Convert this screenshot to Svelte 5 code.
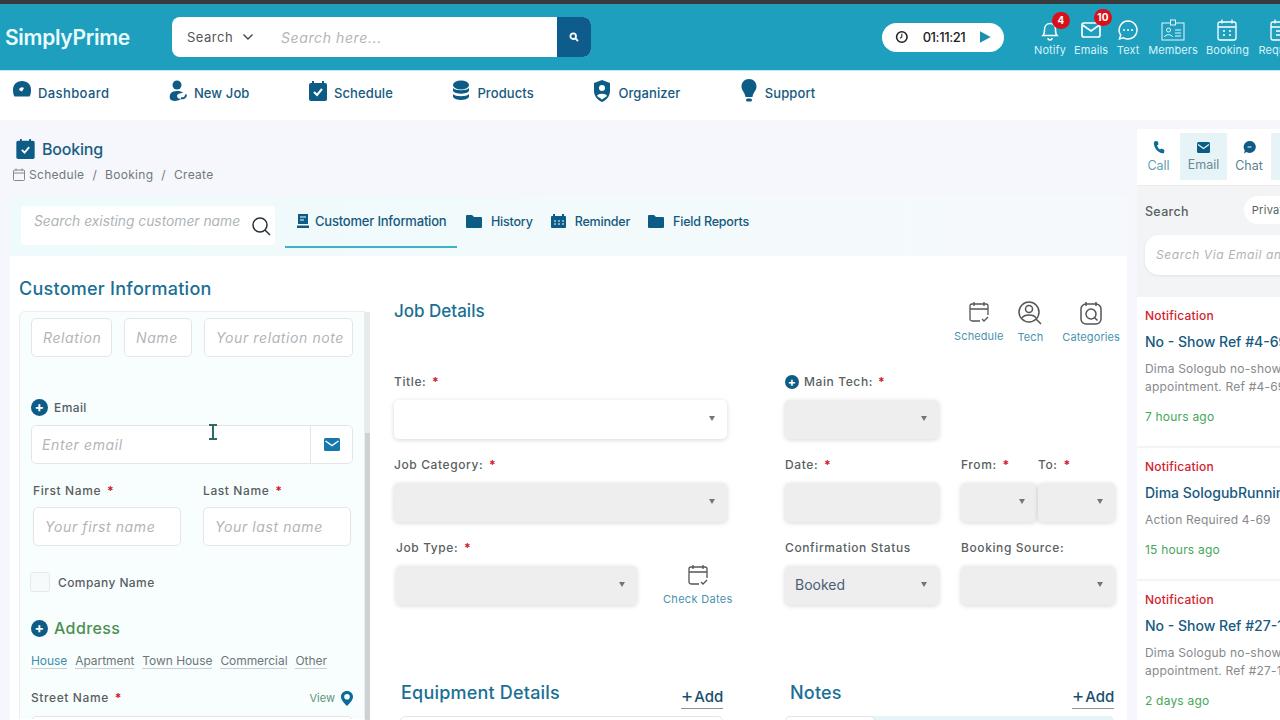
<script>
    const navItems = [
        { name: "Dashboard", icon: "gauge" },
        { name: "New Job", icon: "person" },
        { name: "Schedule", icon: "check" },
        { name: "Products", icon: "db" },
        { name: "Organizer", icon: "shield" },
        { name: "Support", icon: "bulb" }
    ];

    const tabs = ["History", "Reminder", "Field Reports"];
    const addressTypes = ["House", "Apartment", "Town House", "Commercial", "Other"];

    const notes = [
        { title: "No - Show Ref #4-69 Appointment", lines: ["Dima Sologub no-show for", "appointment. Ref #4-69"], time: "7 hours ago" },
        { title: "Dima SologubRunning Late", lines: ["Action Required 4-69"], time: "15 hours ago" },
        { title: "No - Show Ref #27-13 Appointment", lines: ["Dima Sologub no-show for", "appointment. Ref #27-13"], time: "2 days ago" }
    ];
</script>

<div class="topline"></div>

<header class="header">
    <div class="logo">SimplyPrime</div>
    <div class="search">
        <div class="search-kind">Search
            <svg width="12" height="8" viewBox="0 0 12 8"><path d="M1.5 1.5 6 6l4.500-4.500" fill="none" stroke="#444" stroke-width="1.400"/></svg>
        </div>
        <div class="search-input">Search here...</div>
        <div class="search-btn">
            <svg width="10" height="10" viewBox="0 0 10 10"><circle cx="4.200" cy="4.200" r="2.800" fill="none" stroke="#fff" stroke-width="1.800"/><path d="m6.500 6.500 2.500 2.500" stroke="#fff" stroke-width="1.800"/></svg>
        </div>
    </div>
    <div class="timer">
        <svg width="14" height="14" viewBox="0 0 13 13"><circle cx="6.500" cy="6.500" r="5" fill="none" stroke="#222" stroke-width="1.500"/><path d="M6.500 3.500v3L4.800 7.800" fill="none" stroke="#222"/></svg>
        <span>01:11:21</span>
        <svg width="11" height="12" viewBox="0 0 11 12"><path d="M0 0l11 6-11 6z" fill="#1f8fb0"/></svg>
    </div>
    <div class="tools">
        <div class="tool notify">
            <svg width="24" height="24" viewBox="0 0 24 24" fill="none" stroke="#fff" stroke-width="1.500"><path d="M5 17.500c1.500-1.500 1.500-3 1.500-6 0-3.500 2.300-6 5.500-6s5.500 2.500 5.500 6c0 3 0 4.500 1.500 6z"/><path d="M10 20a2 2 0 0 0 4 0"/></svg>
            <span class="badge">4</span>
            <span>Notify</span>
        </div>
        <div class="tool mails">
            <svg width="24" height="24" viewBox="0 0 24 24" fill="none" stroke="#fff" stroke-width="1.700"><rect x="3" y="5" width="18" height="14" rx="2"/><path d="m3.500 7 8.500 6 8.500-6"/></svg>
            <span class="badge">10</span>
            <span>Emails</span>
        </div>
        <div class="tool text">
            <svg width="24" height="24" viewBox="0 0 24 24" fill="none" stroke="#fff" stroke-width="1.500"><path d="M12 3a9 9 0 1 1-4.500 16.800L3.500 21l1.200-4A9 9 0 0 1 12 3z"/><path d="M8 12h.1M12 12h.1M16 12h.1" stroke-width="1.800" stroke-linecap="round"/></svg>
            <span>Text</span>
        </div>
        <div class="tool members">
            <svg width="24" height="24" viewBox="0 0 24 24" fill="none" stroke="#e8f6fa" stroke-width="1"><rect x="1" y="5" width="22" height="17"/><rect x="9.500" y="2" width="5" height="5" fill="#1f9fbd"/><circle cx="7.500" cy="12" r="2"/><path d="M3.500 19c.5-3 7.500-3 8 0M14 12h6M14 15h6M14 18h6"/></svg>
            <span>Members</span>
        </div>
        <div class="tool booking">
            <svg width="24" height="24" viewBox="0 0 24 24" fill="none" stroke="#fff" stroke-width="1.300"><rect x="3" y="4" width="18" height="18" rx="2"/><path d="M7 1.500v4M17 1.500v4M3 9h18M8 13h2M14 13h2M8 17h2M14 17h2"/></svg>
            <span>Booking</span>
        </div>
        <div class="tool request">
            <svg width="24" height="24" viewBox="0 0 24 24" fill="none" stroke="#fff" stroke-width="1.300"><rect x="3" y="4" width="18" height="18" rx="2"/><path d="M7 1.500v4M17 1.500v4M3 9h18M8 13h8M8 17h8"/></svg>
            <span>Request</span>
        </div>
    </div>
</header>

<nav class="nav">
    {#each navItems as item}
        <div class="nav-item">
            <svg class="nav-icon" width="22" height="24" viewBox="0 0 22 24" fill="#0d5c86">
                {#if item.icon === "gauge"}
                    <path d="M11 2c5.500 0 9 3.500 9 9 0 3-.5 5-1.500 6.500h-15C2.500 16 2 14 2 11c0-5.500 3.500-9 9-9z"/>
                    <path d="M8 11a3 3 0 0 1 5-2l-2 3.500z" fill="#fff"/>
                {:else if item.icon === "person"}
                    <circle cx="10" cy="6" r="4.500"/>
                    <path d="M3 20c-1-5 1-8 7-8 3 0 5 .5 6 2-3 0-6 1-6 3s2 3 4 3c-2 2-9 3-11 0z"/>
                    <path d="M14 19c2.500 1 5-.5 5-3.500" fill="none" stroke="#0d5c86" stroke-width="2"/>
                {:else if item.icon === "check"}
                    <path d="M6 2v3M16 2v3" stroke="#0d5c86" stroke-width="2"/>
                    <rect x="2" y="4" width="18" height="18" rx="2"/>
                    <path d="m7 13 3 3 5-6" fill="none" stroke="#fff" stroke-width="2"/>
                {:else if item.icon === "db"}
                    <ellipse cx="11" cy="6" rx="8" ry="4.500"/>
                    <path d="M3 9c2 3 14 3 16 0v3c-2 3.500-14 3.500-16 0zM3 15c2 3 14 3 16 0v3c-2 4-14 4-16 0z"/>
                {:else if item.icon === "shield"}
                    <path d="M11 1l8 3v8c0 5-3.500 9-8 11-4.500-2-8-6-8-11V4z"/>
                    <circle cx="11" cy="9" r="3" fill="#fff"/>
                    <path d="M6 17c1-3 9-3 10 0l-5 3.500z" fill="#fff"/>
                {:else}
                    <path d="M11 0c4.500 0 7.500 3.500 7.500 7.500 0 4-3.500 6-4 10.500h-7C7 13.500 3.500 11.500 3.500 7.500 3.500 3.500 6.500 0 11 0z"/>
                    <rect x="8" y="19.500" width="6" height="3" rx="1.500"/>
                {/if}
            </svg>
            <span>{item.name}</span>
        </div>
    {/each}
</nav>

<div class="page">
    <main class="content">
        <div class="title-row">
            <svg width="21" height="22" viewBox="0 0 22 24" fill="#0d5c86"><path d="M6 1v4M16 1v4" stroke="#0d5c86" stroke-width="2"/><rect x="1" y="3" width="20" height="20" rx="2"/><path d="m7 13 3 3 5-6" fill="none" stroke="#fff" stroke-width="2"/></svg>
            <h1>Booking</h1>
        </div>
        <div class="crumbs">
            <svg width="12" height="13" viewBox="0 0 12 13" fill="none" stroke="#888"><rect x=".5" y="2" width="11" height="10.500" rx="1"/><path d="M3 .5V3M9 .5V3M.5 5h11"/></svg>
            <span class="crumb-first">Schedule</span><i>/</i><span>Booking</span><i>/</i><span>Create</span>
        </div>

        <div class="tabbar">
            <div class="customer-search">
                <span>Search existing customer name</span>
                <svg width="20" height="20" viewBox="0 0 20 20" fill="none" stroke="#26323c" stroke-width="1.500"><circle cx="9" cy="9" r="7"/><path d="m14 14 5 5"/></svg>
            </div>
            <div class="tab active">
                <svg width="12" height="14" viewBox="0 0 12 14" fill="#0d5c86"><path d="M1 0h10v10H1z"/><path d="M3 3h6M3 6h4" stroke="#fff"/><path d="M0 11.500h12V14H0z"/></svg>
                Customer Information
            </div>
            {#each tabs as tab, i}
                <div class="tab">
                    {#if i === 1}
                        <svg width="15" height="14" viewBox="0 0 15 14" fill="#0d5c86"><rect y="2" width="15" height="12" rx="1"/><path d="M3 0v3M12 0v3" stroke="#0d5c86" stroke-width="2"/><path d="M3 7h2M7 7h2M11 7h2M3 10h2M7 10h2M11 10h2" stroke="#fff"/></svg>
                    {:else}
                        <svg width="16" height="14" viewBox="0 0 16 14" fill="#0d5c86"><path d="M0 2a1 1 0 0 1 1-1h5l2 2h7a1 1 0 0 1 1 1v9a1 1 0 0 1-1 1H1a1 1 0 0 1-1-1z"/></svg>
                    {/if}
                    {tab}
                </div>
            {/each}
        </div>

        <div class="sheet">
            <section class="customer">
                <h2>Customer Information</h2>
                <div class="scroller">
                    <div class="relation-row">
                        <div class="field rel">Relation</div>
                        <div class="field nam">Name</div>
                        <div class="field note">Your relation note</div>
                    </div>

                    <div class="plus-label email-label">
                        <span class="plus">+</span> Email
                    </div>
                    <div class="email-box">
                        <span>Enter email</span>
                        <div class="email-icon">
                            <svg width="16" height="13" viewBox="0 0 16 13"><rect width="16" height="13" rx="1.500" fill="#1577ab"/><path d="m1.500 3 6.500 4.500L14.500 3" fill="none" stroke="#fff" stroke-width="1.500"/></svg>
                        </div>
                    </div>

                    <div class="names">
                        <div>
                            <div class="lbl">First Name <b>*</b></div>
                            <div class="field">Your first name</div>
                        </div>
                        <div>
                            <div class="lbl">Last Name <b>*</b></div>
                            <div class="field">Your last name</div>
                        </div>
                    </div>

                    <div class="company">
                        <span class="box"></span> Company Name
                    </div>

                    <div class="plus-label address">
                        <span class="plus">+</span> Address
                    </div>
                    <div class="types">
                        {#each addressTypes as t, i}
                            <span class:first={i === 0}>{t}</span>
                        {/each}
                    </div>
                    <div class="street">
                        <div class="lbl">Street Name <b>*</b></div>
                        <div class="view">View
                            <svg width="12" height="15" viewBox="0 0 12 15"><path fill-rule="evenodd" d="M6 0c3.500 0 6 2.500 6 5.800 0 3.500-3.500 6.700-6 9.200C3.500 12.500 0 9.300 0 5.800 0 2.500 2.500 0 6 0zm0 3a2.800 2.800 0 1 0 0 5.600A2.800 2.800 0 0 0 6 3z" fill="#0d6a96"/></svg>
                        </div>
                    </div>
                    <div class="field street-field"></div>
                </div>
                <div class="scrollbar"><div class="thumb"></div></div>
            </section>

            <section class="job">
                <div class="job-head">
                    <h3>Job Details</h3>
                    <div class="job-actions">
                        <div class="action">
                            <svg width="22" height="22" viewBox="0 0 22 22" fill="none" stroke="#555" stroke-width="1.300"><path d="M12 20H4a2 2 0 0 1-2-2V5a2 2 0 0 1 2-2h14a2 2 0 0 1 2 2v9M6 1v4M16 1v4M2 8h18"/><path d="m14 18 2 2 4-4"/></svg>
                            Schedule
                        </div>
                        <div class="action tall">
                            <svg width="24" height="24" viewBox="0 0 24 24" fill="none" stroke="#555" stroke-width="1.500"><circle cx="11" cy="11" r="10"/><circle cx="11" cy="8" r="3.500"/><path d="M4 17c2-4 12-4 14 0M18 18l5 5"/></svg>
                            Tech
                        </div>
                        <div class="action tall cats">
                            <svg width="24" height="24" viewBox="0 0 24 24" fill="none" stroke="#555" stroke-width="1.500"><rect x="2" y="3" width="20" height="20" rx="5"/><path d="M7 1v4M17 1v4"/><circle cx="12" cy="13" r="5"/><path d="m15.500 16.500 3 3"/></svg>
                            Categories
                        </div>
                    </div>
                </div>

                <div class="job-cols">
                    <div class="job-left">
                        <div class="row">
                            <div class="lbl">Title: <b>*</b></div>
                            <div class="select white"><i></i></div>
                        </div>
                        <div class="row">
                            <div class="lbl">Job Category: <b>*</b></div>
                            <div class="select"><i></i></div>
                        </div>
                        <div class="row shift">
                            <div class="lbl">Job Type: <b>*</b></div>
                            <div class="type-row">
                                <div class="select"><i></i></div>
                                <div class="action check">
                                    <svg width="22" height="22" viewBox="0 0 22 22" fill="none" stroke="#555" stroke-width="1.300"><path d="M12 20H4a2 2 0 0 1-2-2V5a2 2 0 0 1 2-2h14a2 2 0 0 1 2 2v9M6 1v4M16 1v4M2 8h18"/><path d="m14 18 2 2 4-4"/></svg>
                                    Check Dates
                                </div>
                            </div>
                        </div>
                    </div>
                    <div class="job-right">
                        <div class="row">
                            <div class="lbl main-tech"><span class="plus small">+</span> Main Tech: <b>*</b></div>
                            <div class="select"><i></i></div>
                        </div>
                        <div class="row"></div>
                        <div class="row">
                            <div class="lbl">Date: <b>*</b></div>
                            <div class="select"></div>
                        </div>
                        <div class="row">
                            <div class="pair">
                                <div><div class="lbl">From: <b>*</b></div><div class="select"><i></i></div></div>
                                <div><div class="lbl">To: <b>*</b></div><div class="select"><i></i></div></div>
                            </div>
                        </div>
                        <div class="row">
                            <div class="lbl">Confirmation Status</div>
                            <div class="select value">Booked<i></i></div>
                        </div>
                        <div class="row">
                            <div class="lbl">Booking Source:</div>
                            <div class="select"><i></i></div>
                        </div>
                    </div>
                </div>

                <div class="lower">
                    <div class="lower-col equip">
                        <div class="lower-head">
                            <h4>Equipment Details</h4>
                            <div class="add"><span>+</span>Add</div>
                        </div>
                        <div class="lower-box"></div>
                    </div>
                    <div class="lower-col notes">
                        <div class="lower-head">
                            <h4>Notes</h4>
                            <div class="add"><span>+</span>Add</div>
                        </div>
                        <div class="notes-tabs"><div></div></div>
                    </div>
                </div>
            </section>
        </div>
    </main>

    <aside class="side">
        <div class="side-tabs">
            <div class="side-tab">
                <svg width="12" height="13" viewBox="0 0 12 13"><path d="M2.500 0 5 .5l.5 3-1.500 1c.5 1.500 1.500 3 3 4l1.500-1 3 1.500-.5 3c-5 1.500-11-6-10-11z" fill="#0d6a96"/></svg>
                Call
            </div>
            <div class="side-tab on">
                <svg width="13" height="11" viewBox="0 0 13 11"><rect width="13" height="11" rx="1.500" fill="#0d5c86"/><path d="m1 2.500 5.500 4 5.500-4" fill="none" stroke="#e6f4f7" stroke-width="1.200"/></svg>
                Email
            </div>
            <div class="side-tab">
                <svg width="13" height="13" viewBox="0 0 13 13"><path d="M6.500 0a6 6 0 1 1-3 11L1 12.500l.8-3A6 6 0 0 1 6.500 0z" fill="#0d5c86"/><path d="M4.500 6h4" stroke="#fff"/></svg>
                Chat
            </div>
            <div class="side-tab on"></div>
        </div>
        <div class="side-search">
            <div class="side-search-top">
                <span>Search</span>
                <div class="pill">Private</div>
            </div>
            <div class="side-input">Search Via Email and Name</div>
        </div>
        {#each notes as n}
            <article class="notice">
                <div class="n-kind">Notification</div>
                <div class="n-title">{n.title}</div>
                <div class="n-desc">
                    {#each n.lines as line}
                        <div>{line}</div>
                    {/each}
                </div>
                <div class="n-time">{n.time}</div>
            </article>
        {/each}
    </aside>
</div>

<svg class="cursor" width="10" height="16" viewBox="0 0 10 16" fill="none" stroke="#2d6b66" stroke-width="2"><path d="M1 1h8M1 15h8M5 1v14"/></svg>

<style>
    :global(body) {
        margin: 0;
        height: 720px;
        overflow: hidden;
        background: #f6f7fc;
        font-family: "Inter", "Open Sans", sans-serif;
        color: #555;
    }
    h1, h2, h3, h4 {
        margin: 0;
        font-weight: 500;
    }
    .topline {
        height: 4px;
        background: #383b3d;
    }
    .header {
        height: 66px;
        width: 1280px;
        overflow: hidden;
        background: #1e9fbd;
        border-bottom: 1px solid #b9eef5;
        display: flex;
        align-items: center;
        color: #fff;
    }
    .logo {
        flex: none;
        width: 172px;
        padding-left: 5px;
        box-sizing: border-box;
        font-size: 21px;
        font-weight: 600;
        letter-spacing: -0.3px;
        color: #e8fbff;
    }
    .search {
        flex: none;
        width: 419px;
        height: 40px;
        background: #fff;
        border-radius: 8px;
        display: flex;
        align-items: center;
        color: #555;
        overflow: hidden;
    }
    .search-kind {
        width: 109px;
        padding-left: 15px;
        box-sizing: border-box;
        font-size: 13px;
        letter-spacing: 0.5px;
        display: flex;
        align-items: center;
        gap: 9px;
    }
    .search-input {
        flex: 1;
        font-size: 14px;
        font-style: italic;
        letter-spacing: 0.6px;
        color: #b5b5b5;
    }
    .search-btn {
        width: 34px;
        height: 40px;
        background: #0d5c8c;
        display: flex;
        align-items: center;
        justify-content: center;
    }
    .timer {
        flex: none;
        margin-left: 291px;
        width: 122px;
        height: 29px;
        background: #fff;
        border-radius: 15px;
        display: flex;
        align-items: center;
        padding: 0 13px;
        box-sizing: border-box;
        font-size: 13px;
        font-weight: 500;
        color: #222;
    }
    .timer span {
        margin: 0 15px 0 14px;
        letter-spacing: -0.4px;
    }
    .tools {
        flex: none;
        margin-left: 30px;
        display: flex;
        align-items: flex-start;
        white-space: nowrap;
    }
    .tool {
        position: relative;
        display: flex;
        flex-direction: column;
        align-items: center;
        gap: 1px;
        font-size: 11px;
        letter-spacing: 0.1px;
        color: #d6f3f9;
        margin-right: 8px;
        line-height: 14px;
    }
    .tool.request {
        width: 46px;
        margin-right: 0;
    }
    .badge {
        position: absolute;
        top: -6px;
        left: 18px;
        min-width: 16px;
        height: 17px;
        padding: 0 1px;
        border-radius: 9px;
        background: #d9101a;
        font-size: 10px;
        font-weight: 700;
        line-height: 17px;
        text-align: center;
        color: #fff;
    }
    .mails .badge {
        top: -9px;
        left: 20px;
    }
    .nav {
        height: 49px;
        background: #fff;
        display: flex;
        align-items: center;
        gap: 57.500px;
        padding: 0 0 5px 11px;
        box-sizing: border-box;
    }
    .nav-item {
        display: flex;
        align-items: center;
        gap: 5px;
        font-size: 13px;
        font-weight: 500;
        letter-spacing: 0.1px;
        color: #145a80;
    }
    .nav-item:first-child {
        letter-spacing: 0.4px;
    }
    .nav-icon {
        margin-top: -5px;
    }
    .page {
        display: flex;
        height: 600px;
        overflow: hidden;
    }
    .content {
        flex: none;
        width: 1127px;
        padding: 18px 0 0 10px;
        box-sizing: border-box;
    }
    .title-row {
        display: flex;
        align-items: center;
        gap: 6px;
        padding-left: 5px;
        height: 22px;
        color: #1b5e84;
    }
    h1 {
        font-size: 16px;
        letter-spacing: -0.2px;
    }
    .crumbs {
        display: flex;
        align-items: center;
        margin-top: 7px;
        padding-left: 3px;
        font-size: 12px;
        letter-spacing: 0.3px;
        color: #6f7a80;
    }
    .crumb-first {
        margin-left: 4px;
    }
    .crumbs i {
        margin: 0 8px;
        font-style: normal;
    }
    .tabbar {
        margin-top: 14px;
        height: 60px;
        background: linear-gradient(90deg, #eefafb, #f3fafc 60%, #f6f9fc);
        display: flex;
        align-items: flex-start;
        padding: 10px 0 0 11px;
        box-sizing: border-box;
    }
    .customer-search {
        flex: none;
        width: 254px;
        height: 39px;
        background: #fff;
        border-radius: 4px;
        display: flex;
        align-items: center;
        justify-content: space-between;
        padding: 0 4px 0 13px;
        box-sizing: border-box;
        font-size: 13.800px;
        font-style: italic;
        color: #aeb4b8;
    }
    .customer-search span {
        margin-top: -9px;
    }
    .tab {
        height: 47px;
        display: flex;
        align-items: center;
        gap: 9px;
        padding: 0 9px 7px;
        box-sizing: border-box;
        font-size: 12.500px;
        font-weight: 500;
        letter-spacing: -0.2px;
        color: #15597e;
        margin-top: -5px;
    }
    .tab.active {
        margin-left: 10px;
        width: 172px;
        padding: 0 0 6px 12px;
        gap: 6px;
        font-size: 13px;
        border-bottom: 2px solid #3fb1c9;
    }
    .sheet {
        height: 464px;
        background: #fff;
        display: flex;
    }
    .customer {
        flex: none;
        width: 384px;
        padding: 22px 0 0 9px;
        box-sizing: border-box;
        position: relative;
    }
    h2 {
        font-size: 18px;
        letter-spacing: 0.25px;
        color: #1a7094;
    }
    .scroller {
        margin-top: 12px;
        width: 346px;
        height: 408px;
        box-sizing: border-box;
        border: 1px solid #e9eeee;
        border-bottom: 0;
        border-radius: 6px 0 0 0;
        background: #f8fefe;
        padding: 6px 0 0 11px;
        overflow: hidden;
    }
    .scrollbar {
        position: absolute;
        left: 355px;
        top: 56px;
        width: 5px;
        height: 408px;
        background: #e7eaeb;
    }
    .thumb {
        margin-top: 121px;
        height: 287px;
        background: #cfd2d4;
    }
    .field {
        height: 39px;
        background: #fff;
        border: 1px solid #e3e6e8;
        border-radius: 5px;
        box-sizing: border-box;
        display: flex;
        align-items: center;
        padding: 0 11px;
        font-size: 14px;
        font-style: italic;
        letter-spacing: 0.6px;
        color: #b3b5b8;
        white-space: nowrap;
        overflow: hidden;
    }
    .relation-row {
        display: flex;
        gap: 12px;
    }
    .rel { width: 81px; }
    .nam { width: 68px; }
    .note { width: 149px; }
    .plus-label {
        display: flex;
        align-items: center;
        gap: 6px;
        font-size: 12px;
        font-weight: 500;
        letter-spacing: 0.4px;
        color: #555d63;
    }
    .plus {
        width: 17px;
        height: 17px;
        border-radius: 50%;
        background: #0d5c86;
        color: #fff;
        font-size: 14px;
        font-weight: 700;
        line-height: 16px;
        text-align: center;
    }
    .plus.small {
        width: 14px;
        height: 14px;
        font-size: 12px;
        line-height: 13px;
        display: inline-block;
        margin-right: 2px;
    }
    .email-label {
        margin-top: 42px;
    }
    .email-box {
        margin-top: 9px;
        width: 322px;
        height: 39px;
        background: #fff;
        border: 1px solid #e3e6e8;
        border-radius: 5px;
        box-sizing: border-box;
        display: flex;
        align-items: center;
        justify-content: space-between;
        padding-left: 10px;
        font-size: 14px;
        font-style: italic;
        letter-spacing: 0.6px;
        color: #b3b5b8;
    }
    .email-icon {
        width: 41px;
        height: 100%;
        border-left: 1px solid #e3e6e8;
        display: flex;
        align-items: center;
        justify-content: center;
    }
    .names {
        margin-top: 19px;
        padding-left: 2px;
        display: grid;
        grid-template-columns: 148px 148px;
        column-gap: 22px;
    }
    .lbl {
        font-size: 12px;
        font-weight: 500;
        letter-spacing: 0.6px;
        line-height: 16px;
        color: #595f63;
        white-space: nowrap;
    }
    .lbl b {
        color: #d0142c;
        margin-left: 2px;
    }
    .names .lbl {
        margin-bottom: 8px;
    }
    .company {
        margin-top: 26px;
        display: flex;
        align-items: center;
        gap: 8px;
        font-size: 12px;
        font-weight: 500;
        letter-spacing: 0.4px;
        color: #595f63;
    }
    .box {
        width: 20px;
        height: 20px;
        background: #f6fafa;
        border: 1px solid #e6e9e9;
        border-radius: 3px;
        box-sizing: border-box;
        margin-left: -1px;
    }
    .address {
        margin-top: 26px;
        font-size: 16px;
        color: #4b8f50;
    }
    .types {
        margin-top: 16px;
        display: flex;
        gap: 8px;
        font-size: 12px;
        letter-spacing: -0.06px;
        color: #6d767b;
        height: 16px;
    }
    .types span {
        border-bottom: 1px solid #c9d0d3;
        line-height: 14px;
        height: 14px;
    }
    .types .first {
        color: #3d8eac;
    }
    .street {
        margin-top: 20px;
        width: 322px;
        display: flex;
        justify-content: space-between;
        align-items: center;
    }
    .view {
        display: flex;
        align-items: center;
        gap: 6px;
        font-size: 11px;
        color: #5f9279;
    }
    .street-field {
        margin-top: 10px;
        width: 322px;
    }
    .job {
        flex: 1;
        padding: 43px 7px 0 0;
        box-sizing: border-box;
        min-width: 0;
    }
    .job-head {
        display: flex;
        justify-content: space-between;
        align-items: flex-start;
        height: 75px;
    }
    h3 {
        font-size: 17px;
        margin-top: 2px;
        color: #1a7094;
    }
    .job-actions {
        display: flex;
        gap: 14px;
        margin-top: 2px;
    }
    .action {
        display: flex;
        flex-direction: column;
        align-items: center;
        gap: 6px;
        font-size: 11px;
        letter-spacing: 0.1px;
        color: #4a93b0;
    }
    .action.tall {
        gap: 5px;
    }
    .action.cats {
        margin-left: 5px;
    }
    .job-cols {
        display: flex;
        gap: 58px;
    }
    .job-left {
        flex: none;
        width: 333px;
    }
    .job-right {
        flex: none;
        width: 330px;
        display: grid;
        grid-template-columns: 154px 154px;
        column-gap: 22px;
    }
    .row {
        height: 83px;
    }
    .row .lbl {
        margin-bottom: 10px;
    }
    .shift {
        padding-left: 2px;
    }
    .select {
        height: 39px;
        border-radius: 5px;
        background: #eeeeee;
        box-shadow: 0 1px 5px rgba(0, 0, 0, 0.16);
        position: relative;
        display: flex;
        align-items: center;
        padding: 0 0 2px 10px;
        box-sizing: border-box;
        font-size: 14px;
        color: #4c5d78;
    }
    .select.white {
        background: #fff;
    }
    .select i {
        position: absolute;
        right: 12px;
        top: 16px;
        border: 3.500px solid transparent;
        border-top: 5px solid #757575;
        border-bottom: 0;
    }
    .main-tech {
        display: flex;
        align-items: center;
        gap: 3px;
    }
    .type-row {
        display: flex;
        align-items: flex-start;
    }
    .type-row .select {
        width: 241px;
        flex: none;
    }
    .check {
        margin: -2px 0 0 26px;
        letter-spacing: 0.3px;
        white-space: nowrap;
    }
    .pair {
        display: grid;
        grid-template-columns: 76px 77px;
        column-gap: 1px;
    }
    .pair > div {
        min-width: 0;
    }
    .lower {
        margin-top: 53px;
        display: flex;
    }
    .lower-col {
        flex: none;
    }
    .lower-col.equip {
        width: 323px;
        margin-left: 6px;
    }
    .lower-col.notes {
        width: 329px;
        margin-left: 62px;
    }
    .lower-head {
        display: flex;
        justify-content: space-between;
        align-items: flex-start;
        height: 34px;
    }
    h4 {
        font-size: 18px;
        letter-spacing: 0.2px;
        color: #1a7094;
        margin: 6px 0 0 1px;
    }
    .notes h4 {
        margin-left: 5px;
    }
    .add {
        margin-top: 8px;
        width: 42px;
        height: 24px;
        border-bottom: 1px solid #8a959a;
        font-size: 15px;
        font-weight: 500;
        color: #17506f;
        display: flex;
        align-items: center;
        justify-content: center;
        gap: 1px;
        white-space: nowrap;
    }
    .add span {
        font-size: 19px;
        font-weight: 400;
        line-height: 18px;
    }
    .lower-box {
        height: 30px;
        background: #fff;
        border: 1px solid #e3e6e8;
        border-radius: 5px;
        margin-top: 6px;
    }
    .notes-tabs {
        height: 30px;
        background: #e6f4f7;
        border-radius: 5px;
        margin-top: 6px;
    }
    .notes-tabs div {
        width: 90px;
        height: 30px;
        background: #fff;
        border: 1px solid #e3e6e8;
        border-radius: 5px;
        box-sizing: border-box;
    }
    .side {
        margin: 9px 0 0 10px;
        width: 320px;
        flex: none;
        background: #fff;
        white-space: nowrap;
    }
    .side-tabs {
        height: 56px;
        display: flex;
        padding: 4px 0 0 0;
        box-sizing: border-box;
    }
    .side-tab {
        width: 44px;
        height: 47px;
        display: flex;
        flex-direction: column;
        align-items: center;
        justify-content: center;
        gap: 4px;
        font-size: 12.500px;
        color: #5d9eb6;
    }
    .side-tab.on {
        background: #e6f4f7;
        color: #6d8792;
        width: 47px;
    }
    .side-tab:first-child {
        width: 43px;
    }
    .side-tab:nth-child(3) {
        color: #5d7f8d;
    }
    .side-search {
        height: 112px;
        background: #f3f4f5;
        border-top: 1px solid #ececec;
        box-sizing: border-box;
        padding: 10px 0 0 8px;
    }
    .side-search-top {
        display: flex;
        align-items: center;
        font-size: 12.500px;
        font-weight: 500;
        letter-spacing: 0.3px;
        color: #585f63;
    }
    .side-search-top > span {
        margin-top: 3px;
    }
    .pill {
        margin-left: 55px;
        height: 28px;
        line-height: 28px;
        padding: 0 8px;
        background: #fff;
        border-radius: 14px;
        font-size: 11px;
        font-weight: 400;
    }
    .side-input {
        margin-top: 11px;
        height: 40px;
        line-height: 40px;
        background: #fff;
        border-radius: 14px;
        padding-left: 11px;
        font-size: 12px;
        font-style: italic;
        letter-spacing: 0.6px;
        color: #b0b3b5;
        box-shadow: 0 1px 3px rgba(0, 0, 0, 0.08);
    }
    .notice {
        padding: 12px 8px 0;
        height: 151px;
        box-sizing: border-box;
        border-bottom: 2px solid #f3f4f6;
    }
    .notice:nth-of-type(2) {
        height: 133px;
    }
    .n-kind {
        font-size: 12px;
        font-weight: 500;
        line-height: 14px;
        letter-spacing: 0.2px;
        color: #d2222f;
    }
    .n-title {
        margin-top: 11px;
        font-size: 14px;
        font-weight: 500;
        line-height: 16px;
        color: #155a80;
    }
    .n-desc {
        margin-top: 10px;
        font-size: 12px;
        letter-spacing: 0.2px;
        line-height: 18px;
        color: #868a8d;
    }
    .n-time {
        margin-top: 11px;
        font-size: 12px;
        letter-spacing: 0.2px;
        line-height: 20px;
        color: #45a65a;
    }
    .cursor {
        position: absolute;
        left: 208px;
        top: 424px;
    }
</style>
